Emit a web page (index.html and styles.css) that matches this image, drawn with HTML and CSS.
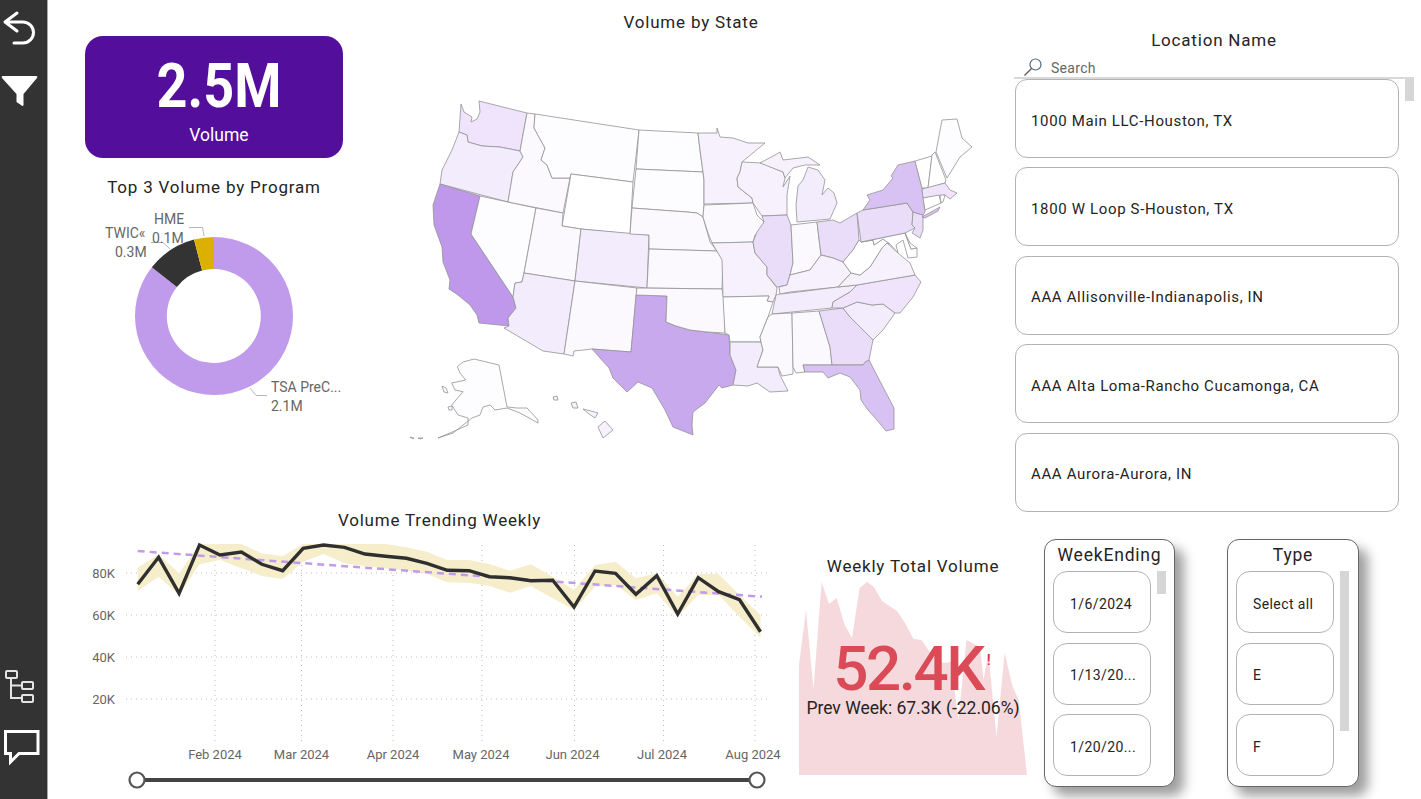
FILE: index.html
```html
<!DOCTYPE html>
<html lang="en">
<head>
<meta charset="utf-8">
<title>Volume Dashboard</title>
<link rel="stylesheet" href="styles.css">
</head>
<body>
<div class="page">
  <aside class="rail">
    <svg class="rail-top" width="47" height="110" viewBox="0 0 47 110">
      <path class="ico-line" d="M17 13 L5 22 L17 31 M5 22 H23 A10 10 0 0 1 23 43 H14"/>
      <path class="ico-fill" d="M3 76 H36 Q38 76 37 78 L23.500 94 V105 Q23 107 21 105 L16.500 102 V94 L2 78 Q1 76 3 76 Z"/>
    </svg>
    <svg class="rail-bottom" width="47" height="129" viewBox="0 670 47 129">
      <g class="ico-tree">
        <rect x="6" y="671" width="11" height="7" rx="1"/>
        <rect x="22" y="682" width="11" height="7" rx="1"/>
        <rect x="22" y="695" width="11" height="7" rx="1"/>
        <path d="M11 678 V698 H22 M11 685.500 H22"/>
      </g>
      <path class="ico-line ico-miter" d="M5.500 731.500 H38 V753.500 H19 L10.500 762 V753.500 H5.500 Z"/>
    </svg>
  </aside>

  <main class="board">
    <section class="top-row">
      <div class="col-left">
        <div class="kpi">
          <div class="kpi-value">2.5M</div>
          <div class="kpi-label">Volume</div>
        </div>
        <h2 class="title title-donut">Top 3 Volume by Program</h2>
        <svg class="donut" width="258" height="222" viewBox="85 198 258 222">
          <path fill="#c09bec" d="M214 237 A79 79 0 1 1 151.800 267.300 L176.900 286.900 A47 47 0 1 0 214 269 Z"/>
          <path fill="#333333" d="M151.800 267.300 A79 79 0 0 1 194 239.600 L202.100 270.500 A47 47 0 0 0 176.900 286.900 Z"/>
          <path fill="#dcb000" d="M194 239.600 A79 79 0 0 1 214 237 V269 A47 47 0 0 0 202.100 270.500 Z"/>
          <path class="leader" d="M189 227.500 H202.500 L204 236"/>
          <path class="leader" d="M151 242.500 H163 L170 249"/>
          <path class="leader" d="M250 388 L256 395.500 H267"/>
          <text class="lbl" x="154" y="224">HME</text>
          <text class="lbl" x="152" y="243">0.1M</text>
          <text class="lbl" x="105" y="238">TWIC«</text>
          <text class="lbl" x="115" y="257">0.3M</text>
          <text class="lbl" x="271" y="392">TSA PreC...</text>
          <text class="lbl" x="271" y="411">2.1M</text>
        </svg>
      </div>

      <div class="col-map">
        <h2 class="title title-map">Volume by State</h2>
        <svg class="map" width="632" height="360" viewBox="375 90 632 360">
          <g class="states">
            <polygon class="c5" points="479,101 527,113 520,151 500,147 482,146 468,142 467,135 459,132 461,104 464,112 472,117 471,122 477,119 480,112"/>
            <polygon class="c6" points="459,132 467,135 468,142 482,146 500,147 520,151 523,157 513,172 508,202 440,184 442,170 452,150"/>
            <polygon class="c1" points="440,184 480,196 471,234 513,297 516,308 508,318 509,326 479,323 477,315 470,305 458,295 449,289 450,280 443,262 442,247 434,225 433,205"/>
            <polygon class="c9" points="480,196 536,208 524,273 522,282 515,283 513,297 471,234"/>
            <polygon class="c8" points="527,113 535,114 534,128 545,148 541,160 547,165 552,178 570,178 563,213 508,202 513,172 523,157 520,151"/>
            <polygon class="c9" points="535,114 639,130 633,182 571,174 570,178 552,178 547,165 541,160 545,148 534,128"/>
            <polygon class="c10" points="571,174 633,182 630,234 581,229 562,226"/>
            <polygon class="c8" points="536,208 563,213 562,226 581,229 575,281 524,273"/>
            <polygon class="c6" points="581,229 649,235 647,288 575,281"/>
            <polygon class="c6" points="524,273 575,281 564,354 543,351 504,328 509,326 508,318 516,308 513,297 515,283 522,282"/>
            <polygon class="c8" points="575,281 637,288 631,352 592,349 574,351 573,356 564,354"/>
            <polygon class="c2" points="636,295 667,296 666,322 676,326 690,330 707,332 729,335 730,355 736,370 733,385 722,388 719,385 705,403 693,412 692,425 693,435 673,427 665,410 652,388 638,382 627,392 613,378 609,368 592,349 631,352"/>
            <polygon class="c9" points="639,130 698,133 700,150 703,172 636,169"/>
            <polygon class="c9" points="636,169 703,172 704,180 704,205 703,217 697,213 687,212 632,208"/>
            <polygon class="c8" points="632,208 687,212 697,213 703,217 710,242 717,251 649,249 649,235 630,234"/>
            <polygon class="c8" points="649,249 717,251 723,260 722,289 647,288"/>
            <polygon class="c8" points="637,288 722,289 724,300 725,333 707,332 690,330 676,326 666,322 667,296 636,295"/>
            <polygon class="c7" points="698,133 717,133 717,128 720,137 733,138 748,143 765,143 742,162 740,172 737,178 738,187 752,198 753,203 704,204 704,180 703,172 700,150"/>
            <polygon class="c8" points="704,205 753,203 757,215 764,222 762,232 755,235 753,242 712,243 708,233 703,217"/>
            <polygon class="c7" points="712,243 753,242 755,253 767,267 767,275 777,288 776,295 773,302 767,301 769,296 723,297 722,260 718,253"/>
            <polygon class="c9" points="723,297 769,296 767,301 773,302 768,317 760,337 761,342 730,342 729,335 725,333"/>
            <polygon class="c6" points="730,342 761,342 763,350 757,367 778,367 780,375 788,391 770,392 757,383 748,386 733,385 736,370 730,355"/>
            <polygon class="c7" points="742,162 762,163 783,172 785,178 783,187 790,176 787,195 787,215 762,216 753,203 752,198 738,187 737,178 740,172"/>
            <polygon class="c4" points="762,216 787,215 791,225 793,263 790,275 787,285 777,287 767,275 767,267 755,253 753,242 757,232 764,222"/>
            <polygon class="c8" points="791,225 817,222 821,255 810,270 790,275 793,263"/>
            <polygon class="c6" points="797,222 830,219 837,203 834,193 828,188 822,195 825,180 818,170 808,167 803,180 798,186 796,205"/>
            <polygon class="c7" points="760,163 775,155 780,152 783,160 800,158 808,157 820,165 805,165 793,168 785,178 783,172"/>
            <polygon class="c4" points="817,222 833,220 840,223 857,213 859,240 853,250 843,262 833,258 821,255"/>
            <polygon class="c7" points="821,255 833,258 843,262 851,273 838,287 790,292 780,294 779,287 787,285 790,275 810,270"/>
            <polygon class="c6" points="780,294 790,293 838,287 857,285 850,292 833,302 832,308 772,314 776,295"/>
            <polygon class="c8" points="772,314 792,313 793,367 793,374 782,376 778,367 757,367 763,350 761,342 760,337 768,317"/>
            <polygon class="c8" points="792,313 819,311 830,347 832,365 803,365 805,372 796,373 793,367"/>
            <polygon class="c4" points="819,311 843,308 850,317 873,340 869,360 863,365 832,365 830,347"/>
            <polygon class="c3" points="803,365 832,365 863,365 865,362 869,360 883,387 894,408 894,429 886,431 877,420 868,410 861,400 860,390 850,377 840,373 828,378 823,372 805,372"/>
            <polygon class="c6" points="843,308 857,302 872,305 883,304 895,313 883,330 873,340 850,317"/>
            <polygon class="c5" points="832,308 833,302 850,292 857,285 915,275 921,282 913,297 900,313 895,313 883,304 872,305 857,302 843,308"/>
            <polygon class="c7" points="838,287 851,273 860,275 870,267 882,248 887,243 898,253 910,263 915,275 857,285"/>
            <polygon class="c10" points="843,262 853,250 859,240 861,242 873,240 874,245 883,239 890,244 887,243 882,248 870,267 860,275 851,273"/>
            <polygon class="c10" points="861,242 905,233 911,249 917,248 917,257 908,258 903,240 896,245 898,253 890,244 883,239 874,245 873,240"/>
            <polygon class="c10" points="905,233 910,243 917,248 911,249"/>
            <polygon class="c4" points="857,213 863,210 907,203 913,212 912,225 915,228 905,233 861,242"/>
            <polygon class="c4" points="913,212 923,215 923,230 920,238 912,233 915,228 912,225"/>
            <polygon class="c3" points="863,210 870,200 867,195 883,190 893,178 891,176 898,165 915,161 922,188 925,212 923,215 913,212 907,203"/>
            <polygon class="c3" points="922,217 940,207 938,211 925,218"/>
            <polygon class="c10" points="915,161 932,156 928,188 922,188"/>
            <polygon class="c10" points="932,155 935,152 946,180 945,183 928,188"/>
            <polygon class="c9" points="936,152 942,120 957,119 962,138 972,147 960,157 947,178"/>
            <polygon class="c5" points="922,189 945,183 950,190 957,193 950,199 945,195 923,198"/>
            <polygon class="c10" points="923,198 939,195 941,203 925,210"/>
            <polygon class="c10" points="940,195 945,195 943,202 941,203"/>
          </g>
          <g class="islands">
            <polygon class="c9" points="457.300,366.700 463,362 474,359 499,365 507,407 517,408 527,408 538,420 538,423 520,413 507,408 495,410 490,405 483,407 480,415 472,418 453,433 438,438 450,433 468,425 468,418 458,415 451.700,405 463,391.700 455,390 451.700,383 465.700,380 460,373"/>
            <polygon class="c9" points="442,386 446,388 448,393 444,392"/>
            <polygon class="c9" points="448,407 452,406 452,410 449,410"/>
            <polygon class="c9" points="410,437 414,438 413,439"/>
            <polygon class="c9" points="418,438 423,438 420,439"/>
            <polygon class="c7" points="605,421 613,430 603,438 598,427"/>
            <polygon class="c7" points="571,403 576,402 578,408 573,408"/>
            <polygon class="c7" points="553,397 557,396 558,400 554,400"/>
            <polygon class="c7" points="583,409 591,411 598,413 595,418 589,414"/>
          </g>
        </svg>
      </div>

      <div class="col-loc">
        <h2 class="title title-loc">Location Name</h2>
        <div class="search">
          <svg width="20" height="20" viewBox="0 0 20 20">
            <circle class="search-ring" cx="12.500" cy="7.500" r="5.500"/>
            <path class="search-handle" d="M8.500 11.500 L1.500 18.500"/>
          </svg>
          <span class="search-text">Search</span>
        </div>
        <div class="loc-body">
          <ul class="loc-list">
            <li class="loc-item">1000 Main LLC-Houston, TX</li>
            <li class="loc-item">1800 W Loop S-Houston, TX</li>
            <li class="loc-item">AAA Allisonville-Indianapolis, IN</li>
            <li class="loc-item">AAA Alta Loma-Rancho Cucamonga, CA</li>
            <li class="loc-item">AAA Aurora-Aurora, IN</li>
          </ul>
          <div class="thumb thumb-loc"></div>
        </div>
      </div>
    </section>

    <section class="bottom-row">
      <div class="col-trend">
        <h2 class="title title-trend">Volume Trending Weekly</h2>
        <svg class="trend" width="719" height="272" viewBox="80 527 719 272">
          <g class="grid">
            <path d="M126 573 H769 M126 615 H769 M126 657 H769 M126 699 H769"/>
            <path d="M215 545 V741 M301.500 545 V741 M393 545 V741 M482 545 V741 M574.500 545 V741 M663.500 545 V741 M755 545 V741"/>
          </g>
          <polygon class="band" points="137.700,567.700 158.600,554.300 179.100,573.300 199.500,544.300 220,544 241.400,544 261.800,553.300 282.700,556 303.200,544 323.600,544 344.500,544 365,544 385.500,544 406.400,547.300 426.800,551.700 447.300,560 469,560 489.500,564 510,570.700 530.900,564.300 552.700,576.700 574,590 595,565 615.500,561.700 635.900,578.300 656.800,573.300 677.700,596.700 698.200,574 718.600,574 739.500,595 760.500,615 760.500,637.700 739.500,616.700 718.600,595 698.200,595 677.700,616.700 656.800,593.300 635.900,600 615.500,585 595,586.700 574,610 552.700,598.300 530.900,586 510,592.700 489.500,586 469,582.700 447.300,582.300 426.800,574 406.400,570.700 385.500,568.300 365,566 344.500,563.300 323.600,554 303.200,561.700 282.700,579 261.800,576 241.400,568.300 220,560 199.500,564.300 179.100,595 158.600,576.700 137.700,591"/>
          <path class="trendline" d="M137.700 551 L762 596.700"/>
          <polyline class="series" points="137.700,584.300 158.600,557.300 179.100,593.300 199.500,545 220,555 241.400,552 261.800,564.300 282.700,570.700 303.200,548.300 323.600,545 344.500,547.300 365,554 385.500,556.300 406.400,558.300 426.800,563.300 447.300,570.300 469,570.700 489.500,576.700 510,577.700 530.900,580.700 552.700,580.300 574,607 595,571 615.500,573.300 635.900,594.300 656.800,575.700 677.700,614 698.200,577.700 718.600,591.700 739.500,599.700 760.500,631.700"/>
          <g class="axis-y">
            <text x="115" y="578">80K</text>
            <text x="115" y="620">60K</text>
            <text x="115" y="662">40K</text>
            <text x="115" y="704">20K</text>
          </g>
          <g class="axis-x">
            <text x="215" y="759">Feb 2024</text>
            <text x="301.500" y="759">Mar 2024</text>
            <text x="393" y="759">Apr 2024</text>
            <text x="481" y="759">May 2024</text>
            <text x="572.500" y="759">Jun 2024</text>
            <text x="662" y="759">Jul 2024</text>
            <text x="753" y="759">Aug 2024</text>
          </g>
          <path class="slider-track" d="M137 780 H757"/>
          <circle class="slider-handle" cx="137" cy="780" r="7.500"/>
          <circle class="slider-handle" cx="757" cy="780" r="7.500"/>
        </svg>
      </div>

      <div class="col-weekly">
        <h2 class="title title-weekly">Weekly Total Volume</h2>
        <div class="spark">
          <svg class="spark-bg" width="228" height="198" viewBox="799 577 228 198">
            <polygon points="799,775 799,665 806,610 813.500,689 821.600,582 829,604 836.600,598 844.700,625 852,638 859.600,588 867,582 874,587 882,601 897,611 905,623 913.500,639 921.600,640 929.700,652 943,663 951,662 958.400,720 966.500,640 980,647 983.500,680 988.400,653 996.500,737 1004.600,653 1012.700,687 1018.700,700 1027,775"/>
          </svg>
          <div class="spark-text">
            <div class="big-row"><span class="big">52.4K</span><span class="alert">!</span></div>
            <div class="prev">Prev Week: 67.3K (-22.06%)</div>
          </div>
        </div>
      </div>

      <div class="slicer slicer-week">
        <h3 class="slicer-title">WeekEnding</h3>
        <div class="slicer-body">
          <ul class="chips">
            <li class="chip">1/6/2024</li>
            <li class="chip">1/13/20...</li>
            <li class="chip">1/20/20...</li>
          </ul>
          <div class="thumb thumb-week"></div>
        </div>
      </div>

      <div class="slicer slicer-type">
        <h3 class="slicer-title">Type</h3>
        <div class="slicer-body">
          <ul class="chips">
            <li class="chip">Select all</li>
            <li class="chip">E</li>
            <li class="chip">F</li>
          </ul>
          <div class="thumb thumb-type"></div>
        </div>
      </div>
    </section>
  </main>
</div>
</body>
</html>
```

FILE: styles.css
```css
* { box-sizing: border-box; }
html, body { margin: 0; padding: 0; }
body {
  width: 1421px;
  height: 799px;
  overflow: hidden;
  background: #fff;
  font-family: Roboto, "Liberation Sans", sans-serif;
  color: #252423;
}
ul { list-style: none; margin: 0; padding: 0; }
h2, h3 { margin: 0; font-weight: 400; }
svg { display: block; }

.page { display: flex; width: 1421px; height: 799px; }

/* left rail */
.rail {
  width: 48px;
  flex: none;
  background: #333;
  border-right: 1px solid #a8a8a8;
  display: flex;
  flex-direction: column;
  justify-content: space-between;
}
.ico-line { fill: none; stroke: #fff; stroke-width: 3; stroke-linecap: round; stroke-linejoin: round; }
.ico-miter { stroke-linecap: butt; stroke-linejoin: miter; }
.ico-fill { fill: #fff; }
.ico-tree { fill: none; stroke: #e4e4e4; stroke-width: 2; }

/* board */
.board { flex: 1; display: flex; flex-direction: column; min-width: 0; }
.top-row { display: flex; height: 513px; flex: none; }
.bottom-row { display: flex; flex: 1; min-height: 0; }

.title {
  font-size: 17px;
  line-height: 22px;
  letter-spacing: 0.8px;
  text-align: center;
  color: #252423;
  white-space: nowrap;
}

/* left column */
.col-left { width: 258px; margin-left: 37px; padding-top: 36px; flex: none; }
.kpi {
  height: 122px;
  background: #530f9b;
  border-radius: 18px;
  color: #fff;
  text-align: center;
  padding: 17px 0 0 10px;
}
.kpi-value { font-size: 62px; line-height: 66px; font-weight: 700; transform: scaleX(.87); }
.kpi-label { font-size: 17.500px; line-height: 24px; margin-top: 4px; }
.title-donut { margin-top: 18px; }
.leader { fill: none; stroke: #b5b5b5; stroke-width: 1; }
.lbl { font-size: 14px; fill: #666; }

/* map */
.col-map { width: 632px; margin-left: 32px; padding-top: 11px; flex: none; }
.map { margin-top: 57px; }
.states polygon, .islands polygon { stroke: #939393; stroke-width: 0.8; stroke-linejoin: round; }
.c1 { fill: #bf98eb; }
.c2 { fill: #c8a9ed; }
.c3 { fill: #d8c1f3; }
.c4 { fill: #e9ddf9; }
.c5 { fill: #efe4fb; }
.c6 { fill: #f2ecfc; }
.c7 { fill: #f6f1fd; }
.c8 { fill: #fbf9fe; }
.c9 { fill: #fdfcff; }
.c10 { fill: #ffffff; }

/* location slicer */
.col-loc { width: 400px; margin-left: 7px; padding-top: 29px; flex: none; }
.search {
  display: flex;
  align-items: flex-end;
  height: 28px;
  padding-left: 9px;
  border-bottom: 2px solid #d9d9d9;
}
.search-ring { fill: none; stroke: #4a6a85; stroke-width: 1.2; }
.search-handle { fill: none; stroke: #555; stroke-width: 1.2; }
.search-text { font-size: 14px; line-height: 17px; color: #666; margin-left: 8px; letter-spacing: .3px; }
.loc-body { display: flex; align-items: flex-start; }
.loc-list { width: 384px; margin-left: 1px; display: flex; flex-direction: column; gap: 9.400px; }
.loc-item {
  height: 79px;
  display: flex;
  align-items: center;
  padding: 4px 0 0 15px;
  border: 1px solid #b3b3b3;
  border-radius: 12px;
  font-size: 15px;
  letter-spacing: .65px;
  color: #252423;
}
.thumb { background: #d6d6d6; flex: none; width: 9px; }
.thumb-loc { height: 22px; margin-left: 6px; }

/* trend */
.col-trend { width: 719px; margin-left: 32px; flex: none; }
.title-trend { line-height: 14px; }
.grid path { fill: none; stroke: #bdbdbd; stroke-width: 1; stroke-dasharray: 1 4; }
.band { fill: #f6eecb; }
.trendline { fill: none; stroke: #c09bec; stroke-width: 2.5; stroke-dasharray: 7 5; }
.series { fill: none; stroke: #2f2f2f; stroke-width: 3.4; stroke-linejoin: miter; }
.axis-y text { font-size: 13px; fill: #666; text-anchor: end; }
.axis-x text { font-size: 13px; fill: #666; text-anchor: middle; }
.slider-track { fill: none; stroke: #444; stroke-width: 4; }
.slider-handle { fill: #fff; stroke: #555; stroke-width: 2.2; }

/* weekly */
.col-weekly { width: 228px; flex: none; padding-top: 42px; }
.spark { position: relative; height: 198px; }
.spark-bg { position: absolute; inset: 0; }
.spark-bg polygon { fill: #f6d9dc; }
.spark-text { position: relative; padding-top: 63px; text-align: center; }
.big-row { display: flex; justify-content: center; align-items: flex-start; padding-right: 2px; }
.big { font-size: 62px; line-height: 58px; font-weight: 500; color: #db4a57; letter-spacing: -2.500px; }
.alert { font-size: 15px; line-height: 14px; font-weight: 500; color: #e2293b; margin-top: 13px; margin-left: 4px; }
.prev { font-size: 17.500px; line-height: 20px; color: #252423; }

/* small slicers */
.slicer {
  width: 131px;
  height: 248px;
  margin-top: 26px;
  padding: 4px 0 0 8px;
  background: #fff;
  border: 1px solid #666;
  border-radius: 12px;
  box-shadow: 9px 9px 12px rgba(0, 0, 0, .38);
  flex: none;
}
.slicer-week { margin-left: 17px; }
.slicer-type { margin-left: 52px; width: 132px; }
.slicer-title {
  font-size: 17.500px;
  line-height: 22px;
  letter-spacing: .8px;
  text-align: center;
  margin-left: -8px;
  color: #252423;
}
.slicer-body { display: flex; align-items: flex-start; margin-top: 5px; }
.chips { width: 98px; display: flex; flex-direction: column; gap: 9.500px; }
.chip {
  height: 62px;
  display: flex;
  align-items: center;
  padding: 3px 0 0 16px;
  border: 1px solid #b3b3b3;
  border-radius: 14px;
  font-size: 14px;
  letter-spacing: .4px;
  color: #252423;
  white-space: nowrap;
}
.thumb-week { height: 23px; margin-left: 6px; }
.thumb-type { height: 160px; margin-left: 6px; }
```
